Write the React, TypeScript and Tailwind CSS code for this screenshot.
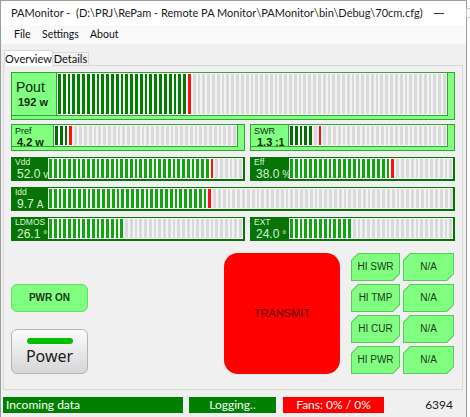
import React from "react";

type Tone = "dark" | "mid" | "bright";
const toneClass: Record<Tone, string> = {
  dark: "bg-[#0a6a0a]",
  mid: "bg-[#057a05]",
  bright: "bg-[#14a314]",
};

function Segs({ n, g, red, tone }: { n: number; g: number; red: number; tone: Tone }) {
  return (
    <div className="flex flex-1 gap-[2px] bg-[#f3f3f3] p-[1px]">
      {Array.from({ length: n }, (_, i) => (
        <div
          key={i}
          className={`flex-1 ${i < g ? toneClass[tone] : i === red ? "bg-[#ff1010]" : "bg-[#dadada]"}`}
        />
      ))}
    </div>
  );
}

function LightRow({
  outer,
  labelW,
  children,
  n,
  g,
  red,
  tone,
}: {
  outer: string;
  labelW: string;
  children: React.ReactNode;
  n: number;
  g: number;
  red: number;
  tone: Tone;
}) {
  return (
    <div className={`flex border border-[#37a337] bg-[#80ff80] pb-[3px] pr-[6px] ${outer}`}>
      <div className="flex flex-1 border-b border-r border-[#37a337]">
        <div className={`flex flex-col border-r border-[#37a337] text-[#0d2a0d] ${labelW}`}>{children}</div>
        <Segs n={n} g={g} red={red} tone={tone} />
      </div>
    </div>
  );
}

function DarkRow({
  labelW,
  label,
  value,
  unit,
  n,
  g,
  red,
}: {
  labelW: string;
  label: string;
  value: string;
  unit: string;
  n: number;
  g: number;
  red: number;
}) {
  return (
    <div className="flex h-[24px] bg-[#087408] pb-[2px] pr-[2px] pt-[1px]">
      <div className={`flex flex-col pl-[4px] text-[#d4f6d4] ${labelW}`}>
        <div className="text-[8.5px] leading-[9px]">{label}</div>
        <div className="mt-[1px] pl-[2px] text-[12px] leading-[12px]">
          {value}
          <span className="ml-[3px] text-[10px]">{unit}</span>
        </div>
      </div>
      <Segs n={n} g={g} red={red} tone="bright" />
    </div>
  );
}

function HexBtn({ text }: { text: string }) {
  return (
    <div className="h-[28px] bg-[#5cc75c] p-[1px] [clip-path:polygon(7px_0,100%_0,100%_calc(100%_-_7px),calc(100%_-_7px)_100%,0_100%,0_7px)]">
      <div className="flex h-full w-full items-center justify-center bg-[#80ff80] text-[10px] text-[#1a3a1a] [clip-path:polygon(6.5px_0,100%_0,100%_calc(100%_-_6.5px),calc(100%_-_6.5px)_100%,0_100%,0_6.5px)]">
        {text}
      </div>
    </div>
  );
}

export default function App() {
  return (
    <div className="relative h-[417px] w-[470px] overflow-hidden bg-white font-['Lato',sans-serif]">
      <div className="flex h-[417px] w-[467px] flex-col border-l border-r border-t border-[#9c9c9c] bg-[#f0f0f0]">
        {/* Title bar */}
        <div className="flex h-[24px] items-center bg-white">
          <svg width="13" height="11" viewBox="0 0 13 11" className="ml-[7px]">
            <rect x="0" y="0" width="13" height="11" fill="#1f9a70" />
            <polyline points="1,6 4,6 5.5,3 7,8.5 8.5,5 9.5,6 12,6" fill="none" stroke="#ffffff" strokeWidth="1" />
          </svg>
          <span className="ml-[3px] whitespace-pre text-[11px] text-[#1a1a1a]">
            {"PAMonitor -  (D:\\PRJ\\RePam - Remote PA Monitor\\PAMonitor\\bin\\Debug\\70cm.cfg)"}
          </span>
          <div className="ml-auto flex h-full">
            <div className="flex w-[32px] items-center justify-center">
              <svg width="10" height="10" viewBox="0 0 10 10">
                <line x1="0" y1="5.5" x2="10" y2="5.5" stroke="#333" strokeWidth="1" />
              </svg>
            </div>
            <div className="flex w-[32px] items-center justify-center">
              <svg width="10" height="10" viewBox="0 0 10 10">
                <rect x="0.5" y="0.5" width="9" height="9" fill="none" stroke="#c4c4c4" strokeWidth="1" />
              </svg>
            </div>
            <div className="flex w-[32px] items-center justify-center">
              <svg width="10" height="10" viewBox="0 0 10 10">
                <path d="M0.5 0.5 L9.5 9.5 M9.5 0.5 L0.5 9.5" stroke="#222" strokeWidth="1" />
              </svg>
            </div>
          </div>
        </div>
        {/* Menu */}
        <div className="flex h-[19px] items-center bg-[#fafafa] text-[10.5px] text-[#111]">
          <span className="ml-[13px] w-[28px]">File</span>
          <span className="w-[48px]">Settings</span>
          <span>About</span>
        </div>
        {/* Tabs */}
        <div className="ml-[3px] mt-[6px] flex items-end">
          <div className="relative z-10 -mb-px flex h-[16px] w-[49px] items-center justify-center border-l border-r border-t border-[#d9d9d9] bg-white text-[11px] leading-none text-[#111]">
            Overview
          </div>
          <div className="flex h-[13px] w-[36px] items-center justify-center border-r border-t border-[#d9d9d9] bg-[#f0f0f0] text-[11px] leading-none text-[#111]">
            Details
          </div>
        </div>
        {/* Panel */}
        <div className="ml-[2px] flex h-[326px] w-[460px] flex-col border border-[#d9d9d9] bg-[#f0f0f0] pl-[7px] pt-[6px] font-['Liberation_Sans',Arial,sans-serif]">
          <LightRow outer="h-[48px] w-[444px]" labelW="w-[45px]" n={81} g={27} red={27} tone="mid">
            <div className="ml-[4px] mt-[7px] text-[14px] leading-[14px]">Pout</div>
            <div className="ml-[6px] mt-[2px] text-[11px] font-bold leading-[12px]">
              192 <span className="text-[11px]">w</span>
            </div>
          </LightRow>

          <div className="mt-[4px] grid w-[444px] grid-cols-[234px_205px] gap-x-[5px]">
            <LightRow outer="h-[27px]" labelW="w-[42px]" n={38} g={3} red={3} tone="dark">
              <div className="ml-[3px] mt-[1px] text-[9px] leading-[10px]">Pref</div>
              <div className="ml-[5px] text-[11px] font-bold leading-[12px]">
                4.2 <span>w</span>
              </div>
            </LightRow>
            <LightRow outer="h-[27px]" labelW="w-[38px]" n={33} g={5} red={6} tone="dark">
              <div className="ml-[3px] mt-[1px] text-[9px] leading-[10px]">SWR</div>
              <div className="ml-[6px] text-[11px] font-bold leading-[12px]">
                1.3 <span className="text-[10px]">:1</span>
              </div>
            </LightRow>
          </div>

          <div className="mt-[6px] grid w-[444px] grid-cols-[234px_205px] gap-x-[5px]">
            <DarkRow labelW="w-[37px]" label="Vdd" value="52.0" unit="v" n={41} g={34} red={34} />
            <DarkRow labelW="w-[39px]" label="Eff" value="38.0" unit="%" n={34} g={21} red={21} />
          </div>

          <div className="mt-[6px] w-[444px]">
            <DarkRow labelW="w-[37px]" label="Idd" value="9.7" unit="A" n={84} g={33} red={33} />
          </div>

          <div className="mt-[6px] grid w-[444px] grid-cols-[234px_205px] gap-x-[5px]">
            <DarkRow labelW="w-[37px]" label="LDMOS" value="26.1" unit="°" n={41} g={16} red={-1} />
            <DarkRow labelW="w-[39px]" label="EXT" value="24.0" unit="°" n={34} g={13} red={-1} />
          </div>

          {/* Bottom controls */}
          <div className="mt-[12px] flex items-start">
            <div className="flex w-[77px] flex-col pt-[31px]">
              <div className="flex h-[28px] items-center justify-center rounded-[6px] border border-[#6ad86a] bg-[#80ff80] text-[10px] font-bold text-[#1a3a1a]">
                PWR ON
              </div>
              <div className="mt-[17px] flex h-[45px] flex-col items-center rounded-[6px] border border-[#b4b4b4] bg-gradient-to-b from-[#fbfbfb] to-[#d6d6d6] pt-[8px]">
                <div className="h-[6px] w-[46px] rounded-[3px] bg-[#00c000]" />
                <div className="mt-[2px] font-['Noto_Sans',sans-serif] text-[16px] leading-[20px] text-[#1a1a1a]">Power</div>
              </div>
            </div>
            <div className="ml-[136px] flex h-[121px] w-[116px] items-center justify-center rounded-[14px] bg-[#ff0000] text-[11px] text-[#5a0000]">
              TRANSMIT
            </div>
            <div className="ml-[11px] grid w-[103px] grid-cols-[49px_51px] gap-[3px]">
              <HexBtn text="HI SWR" />
              <HexBtn text="N/A" />
              <HexBtn text="HI TMP" />
              <HexBtn text="N/A" />
              <HexBtn text="HI CUR" />
              <HexBtn text="N/A" />
              <HexBtn text="HI PWR" />
              <HexBtn text="N/A" />
            </div>
          </div>
        </div>
        {/* Status bar */}
        <div className="mt-[5px] flex h-[22px] items-start pt-[2px] text-[12px] leading-[16px] text-white">
          <div className="ml-[2px] h-[16px] w-[180px] bg-[#008000] pl-[3px]">Incoming data</div>
          <div className="ml-[6px] h-[16px] w-[87px] bg-[#008000] text-center">Logging..</div>
          <div className="ml-[7px] h-[16px] w-[101px] bg-[#ff0000] text-center">Fans: 0% / 0%</div>
          <div className="ml-auto mr-[13px] text-[#1a1a1a]">6394</div>
        </div>
      </div>
    </div>
  );
}
